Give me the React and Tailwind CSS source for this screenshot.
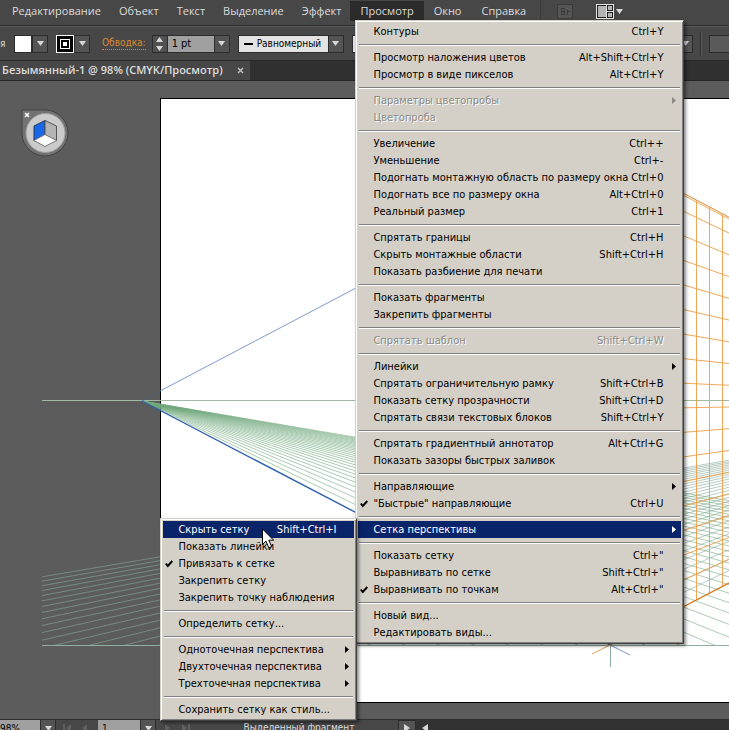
import React from "react";

const SEP = "sep";

const menuNames = ["Редактирование", "Объект", "Текст", "Выделение", "Эффект"];

const gridMenu = [
    { label: "Скрыть сетку", keys: "Shift+Ctrl+I", active: true },
    { label: "Показать линейки" },
    { label: "Привязать к сетке", checked: true },
    { label: "Закрепить сетку" },
    { label: "Закрепить точку наблюдения" },
    SEP,
    { label: "Определить сетку..." },
    SEP,
    { label: "Одноточечная перспектива", more: true },
    { label: "Двухточечная перспектива", more: true },
    { label: "Трехточечная перспектива", more: true },
    SEP,
    { label: "Сохранить сетку как стиль..." },
];

const viewMenu = [
    { label: "Контуры", keys: "Ctrl+Y" },
    SEP,
    { label: "Просмотр наложения цветов", keys: "Alt+Shift+Ctrl+Y" },
    { label: "Просмотр в виде пикселов", keys: "Alt+Ctrl+Y" },
    SEP,
    { label: "Параметры цветопробы", more: true, disabled: true },
    { label: "Цветопроба", disabled: true },
    SEP,
    { label: "Увеличение", keys: "Ctrl++" },
    { label: "Уменьшение", keys: "Ctrl+-" },
    { label: "Подогнать монтажную область по размеру окна", keys: "Ctrl+0" },
    { label: "Подогнать все по размеру окна", keys: "Alt+Ctrl+0" },
    { label: "Реальный размер", keys: "Ctrl+1" },
    SEP,
    { label: "Спрятать границы", keys: "Ctrl+H" },
    { label: "Скрыть монтажные области", keys: "Shift+Ctrl+H" },
    { label: "Показать разбиение для печати" },
    SEP,
    { label: "Показать фрагменты" },
    { label: "Закрепить фрагменты" },
    SEP,
    { label: "Спрятать шаблон", keys: "Shift+Ctrl+W", disabled: true },
    SEP,
    { label: "Линейки", more: true },
    { label: "Спрятать ограничительную рамку", keys: "Shift+Ctrl+B" },
    { label: "Показать сетку прозрачности", keys: "Shift+Ctrl+D" },
    { label: "Спрятать связи текстовых блоков", keys: "Shift+Ctrl+Y" },
    SEP,
    { label: "Спрятать градиентный аннотатор", keys: "Alt+Ctrl+G" },
    { label: "Показать зазоры быстрых заливок" },
    SEP,
    { label: "Направляющие", more: true },
    { label: "\"Быстрые\" направляющие", keys: "Ctrl+U", checked: true },
    SEP,
    { label: "Сетка перспективы", more: true, active: true, children: gridMenu },
    SEP,
    { label: "Показать сетку", keys: "Ctrl+\"" },
    { label: "Выравнивать по сетке", keys: "Shift+Ctrl+\"" },
    { label: "Выравнивать по точкам", keys: "Alt+Ctrl+\"", checked: true },
    SEP,
    { label: "Новый вид..." },
    { label: "Редактировать виды..." },
];

const MenuPanel = ({ items, className }) => (
    <ul
        className={`absolute z-10 border border-t-[#d4d0c8] border-l-[#d4d0c8] border-r-[#404040] border-b-[#404040] bg-[#d4d0c8] p-0.5 shadow-[inset_1px_1px_0_#fff,inset_-1px_-1px_0_#808080,2px_2px_3px_rgba(0,0,0,0.45)] font-['DejaVu_Sans_Condensed','DejaVu_Sans',sans-serif] text-[11px] text-black ${className}`}
    >
        {items.map((item, index) =>
            item === SEP ? (
                <li key={index} className="mx-px flex h-[9px] items-center">
                    <hr className="h-0.5 w-full border-t border-b border-t-[#808080] border-b-white" />
                </li>
            ) : (
                <MenuRow key={index} item={item} />
            )
        )}
    </ul>
);

const MenuRow = ({ item }) => (
    <li className="relative">
        <button
            disabled={item.disabled}
            className={`relative flex h-[17px] w-full items-center justify-between pr-[18px] pl-[15px] leading-[17px] whitespace-nowrap ${
                item.active ? "bg-[#0a246a] text-white" : ""
            } ${item.disabled ? "text-[#8c8a85] [text-shadow:1px_1px_0_#fff]" : ""}`}
        >
            {item.checked && (
                <svg className="absolute top-1 left-0.5" width="8" height="10" viewBox="0 0 8 10">
                    <path d="M0.8 4.5 L2.8 7 L7.3 2" fill="none" stroke="#000" strokeWidth="2" />
                </svg>
            )}
            <span>{item.label}</span>
            {item.keys && <span>{item.keys}</span>}
            {item.more && (
                <svg className="absolute top-[5px] right-[5px]" width="4" height="7" viewBox="0 0 4 7" fill="currentColor">
                    <path d="M0 0 L4 3.5 L0 7 Z" />
                </svg>
            )}
        </button>
        {item.children && <MenuPanel items={item.children} className="-top-[3px] right-full mr-px w-[197px]" />}
    </li>
);

const Caret = ({ className = "" }) => (
    <svg className={className} width="7" height="5" viewBox="0 0 7 5">
        <path d="M0 0 H7 L3.5 5 Z" fill="#d8d8d8" />
    </svg>
);

const DropButton = ({ label }) => (
    <button
        aria-label={label}
        className="flex h-[18px] w-4 shrink-0 items-center justify-center border border-[#2c2c2c] bg-[#545454]"
    >
        <Caret />
    </button>
);

const MenuBar = () => (
    <nav className="flex h-[26px] shrink-0 border-b border-[#2e2e2e] bg-[#474747] pl-[3px] font-['Open_Sans',sans-serif] text-[11px] leading-[22px] text-[#dcdcdc]">
        {menuNames.map((name) => (
            <button key={name} className="h-[22px] px-[9px]">
                {name}
            </button>
        ))}
        <div className="relative">
            <button className="mt-px h-5 bg-[#2b2b2b] px-2.5 leading-5">Просмотр</button>
            <MenuPanel items={viewMenu} className="top-5 left-[5px] w-[329px]" />
        </div>
        <button className="h-[22px] px-2.5">Окно</button>
        <button className="h-[22px] px-2.5">Справка</button>
        <div className="ml-1 h-[22px] border-l border-[#3a3a3a]" />
        <button aria-label="Bridge" className="ml-4 h-[22px]">
            <svg width="17" height="15" viewBox="0 0 17 15">
                <rect x="0.5" y="0.5" width="15" height="14" fill="#545454" stroke="#3b3b3b" />
                <path d="M4.5 4 V11 M4.5 4.5 H7.5 V7.5 H4.5 M7.5 7.5 V10.5 H4.5 M10.5 6 V11 M10.5 7.5 H12.5" fill="none" stroke="#3a3a3a" />
            </svg>
        </button>
        <button aria-label="Рабочая среда" className="ml-[22px] flex h-[22px] items-center gap-0.5">
            <svg width="18" height="15" viewBox="0 0 18 15">
                <rect x="0.5" y="0.5" width="17" height="14" fill="#222" stroke="#e4e4e4" />
                <rect x="2" y="2" width="8" height="11" fill="#b4b4b4" />
                <rect x="12" y="2" width="4" height="4" fill="#b4b4b4" />
                <path d="M11 7.5 H17 M10.5 1 V14" stroke="#e4e4e4" />
                <rect x="12" y="9" width="4" height="4" fill="#b4b4b4" />
            </svg>
            <Caret />
        </button>
    </nav>
);

const ControlBar = () => (
    <div className="flex h-[35px] shrink-0 items-center border-t border-b border-t-[#595959] border-b-[#2a2a2a] bg-[#474747] font-['DejaVu_Sans_Condensed','DejaVu_Sans',sans-serif] text-[11px]">
        <span className="w-[14px] overflow-hidden text-[10px] text-[#dcdcdc]">я</span>
        <button aria-label="Заливка" className="h-[18px] w-[18px] border border-[#2c2c2c] bg-white" />
        <DropButton label="Выбрать заливку" />
        <button aria-label="Цвет обводки" className="ml-2 flex h-[18px] w-[18px] items-center justify-center border border-white bg-black">
            <svg width="10" height="10" viewBox="0 0 10 10">
                <rect x="0.5" y="0.5" width="9" height="9" fill="none" stroke="#fff" />
                <rect x="3" y="3" width="4" height="4" fill="#fff" />
            </svg>
        </button>
        <DropButton label="Выбрать обводку" />
        <a href="#stroke" className="ml-3 border-b border-dotted border-[#d98a2e] text-[10px] leading-3 text-[#d98a2e]">
            Обводка:
        </a>
        <button aria-label="Изменить толщину" className="ml-1.5 flex h-[18px] w-4 flex-col items-center justify-center gap-1 border border-[#2c2c2c] bg-[#505050]">
            <Caret className="rotate-180" />
            <Caret />
        </button>
        <input aria-label="Толщина обводки" defaultValue="1 pt" className="h-[18px] w-[46px] border-y border-[#2c2c2c] bg-[#a0a0a0] px-1 text-black" />
        <DropButton label="Список толщин" />
        <div className="relative ml-2 flex h-[18px] w-[106px]">
            <select aria-label="Профиль" className="w-full appearance-none border border-[#2c2c2c] bg-[#e3e3e3] pl-[18px] text-[10px] leading-4 text-black">
                <option>Равномерный</option>
            </select>
            <span className="absolute top-2 left-1.5 h-0.5 w-[9px] bg-black" />
            <span className="absolute top-0 right-0 flex h-[18px] w-4 items-center justify-center border border-[#2c2c2c] bg-[#545454]">
                <Caret />
            </span>
        </div>
        <input aria-label="Кисть" className="ml-2 h-[18px] min-w-0 flex-1 border border-[#2c2c2c] bg-[#e3e3e3]" />
        <DropButton label="Список кистей" />
        <div className="mx-[7px] h-6 border-r border-l border-r-[#5a5a5a] border-l-[#303030]" />
        <button aria-label="Стиль" className="h-[18px] w-5 border border-r-0 border-[#2c2c2c] bg-[#5a5a5a]" />
    </div>
);

const TabBar = () => (
    <div className="flex h-5 shrink-0 border-b border-[#242424] bg-[#303030]">
        <div className="flex items-center gap-3.5 bg-[#474747] pr-1.5 pl-0.5 font-['Open_Sans',sans-serif] text-[11px] font-semibold text-[#dcdcdc]">
            <span>Безымянный-1 @ 98% (CMYK/Просмотр)</span>
            <button aria-label="Закрыть" className="flex">
                <svg width="7" height="7" viewBox="0 0 7 7">
                    <path d="M1 1 L6 6 M6 1 L1 6" stroke="#c8c8c8" strokeWidth="1.3" />
                </svg>
            </button>
        </div>
    </div>
);

// vanishing points and the ground point the three planes share
const LEFT = { x: 142, y: 401 };
const RIGHT = { x: 1078, y: 401 };
const GROUND = { x: 610, y: 645 };
const SLOPE = (GROUND.y - LEFT.y) / (GROUND.x - LEFT.x);

const floorSlopes = Array.from({ length: 28 }, (_, i) => SLOPE / (1 + 0.074 * (i + 1)));
const wallHeights = [195, ...Array.from({ length: 16 }, (_, i) => 211 + i * 24.6)];

const PerspectiveGrid = () => (
    <svg className="absolute inset-0 h-full w-full" viewBox="0 81 729 638" preserveAspectRatio="xMinYMin slice" fill="none">
        <clipPath id="floor">
            <rect x="42" y="401" width="1036" height="244" />
        </clipPath>
        <path d="M42 400.5 H1200" stroke="#a3b9a3" />
        <g clipPath="url(#floor)" stroke="#72aa7e" strokeWidth="0.6">
            {floorSlopes.map((s, i) => (
                <path key={i} d={`M${LEFT.x} ${LEFT.y} L${RIGHT.x} ${LEFT.y + 936 * s}`} />
            ))}
            {floorSlopes.map((s, i) => (
                <path key={i} d={`M${RIGHT.x} ${RIGHT.y} L42 ${RIGHT.y + 1036 * s}`} stroke="#86aa9b" />
            ))}
        </g>
        <path d="M42 645.5 H1200" stroke="#8fae9f" />
        <g stroke="#ef9d45" strokeWidth="0.9">
            {wallHeights.map((y) => (
                <path key={y} d={`M683 ${y} L${RIGHT.x} ${RIGHT.y}`} />
            ))}
            {[683.5, 696.5, 709.5, 722.5, 735.5].map((x) => (
                <path key={x} d={`M${x} ${401 - (RIGHT.x - x) * 0.525} V${401 + (RIGHT.x - x) * SLOPE}`} />
            ))}
            <path d={`M${GROUND.x} ${GROUND.y} L${RIGHT.x} ${RIGHT.y}`} stroke="#d9791f" strokeWidth="1.4" />
            <path d="M684 193.500 L1078 401" stroke="#d9791f" />
        </g>
        <path d="M160 391 L356 288" stroke="#6f8fc9" strokeWidth="0.9" />
        <path d="M142 401 L160 391" stroke="#4d6180" strokeWidth="0.7" />
        <path d={`M${LEFT.x} ${LEFT.y} L${GROUND.x} ${GROUND.y}`} stroke="#2f62ae" strokeWidth="1.4" />
        <path d="M610 645 L592 654" stroke="#e0a060" />
        <path d="M610 645 L630 655" stroke="#7b95c8" />
        <path d="M610.5 645 V667" stroke="#8fae9f" />
    </svg>
);

const PlaneSwitcher = () => (
    <svg className="absolute top-7 left-[21px]" width="48" height="48" viewBox="0 0 48 48">
        <path d="M1 1 H25 A23 23 0 1 1 1 25 Z" fill="#727272" stroke="#424242" />
        <circle cx="24.5" cy="24" r="19.5" fill="#cbcbcb" stroke="#a0a0a0" />
        <path d="M24 11.500 L13 17 V32 L24 26 Z" fill="#1767e8" stroke="#27395c" />
        <path d="M24 11.500 L35.500 17 V32 L24 26 Z" fill="#b4b4b4" stroke="#555" />
        <path d="M24 25.500 L35.500 31.500 L24 37.500 L13 31.500 Z" fill="#fff" stroke="#777" />
        <path d="M4 4 L8 8 M8 4 L4 8" stroke="#fff" strokeWidth="1.600" />
    </svg>
);

const Pointer = () => (
    <svg className="pointer-events-none absolute top-[447px] left-[262px] z-20" width="13" height="21" viewBox="0 0 13 21">
        <path d="M0.500 1 V16.500 L4 13.200 L6.800 19.800 L9.600 18.600 L6.800 12.200 H11.700 Z" fill="#fff" stroke="#000" />
    </svg>
);

const StatusBar = () => (
    <div className="h-[11px] shrink-0 overflow-hidden border-t border-[#303030] bg-[#474747] font-['DejaVu_Sans_Condensed','DejaVu_Sans',sans-serif] text-[10px]">
        <div className="flex h-4 items-center">
            <input aria-label="Масштаб" defaultValue="98%" className="h-4 w-10 bg-[#a0a0a0] text-black" />
            <DropButton label="Выбрать масштаб" />
            <svg className="mx-1.5 shrink-0" width="30" height="10" viewBox="0 0 30 10" fill="#606060">
                <path d="M1 1 H3 V9 H1 Z M9 1 V9 L4 5 Z M25 1 V9 L20 5 Z" />
            </svg>
            <input aria-label="Монтажная область" defaultValue="1" className="h-4 w-[42px] bg-[#a0a0a0] px-1 text-black" />
            <DropButton label="Выбрать область" />
            <svg className="mx-2 shrink-0" width="28" height="10" viewBox="0 0 28 10" fill="#606060">
                <path d="M1 1 V9 L6 5 Z M18 1 V9 L23 5 Z M24 1 H26 V9 H24 Z" />
            </svg>
            <span className="w-[198px] shrink-0 text-center leading-[14px] text-[#dcdcdc]">Выделенный фрагмент</span>
            <button aria-label="Показать" className="flex h-4 w-[18px] shrink-0 items-center justify-center border border-[#2c2c2c] bg-[#545454]">
                <svg width="6" height="8" viewBox="0 0 6 8">
                    <path d="M0 0 V8 L6 4 Z" fill="#d8d8d8" />
                </svg>
            </button>
            <div className="flex h-4 flex-1 items-center bg-[#323232] pl-1.5">
                <svg width="6" height="8" viewBox="0 0 6 8">
                    <path d="M6 0 V8 L0 4 Z" fill="#d8d8d8" />
                </svg>
            </div>
        </div>
    </div>
);

const App = () => (
    <div className="flex h-screen flex-col overflow-hidden bg-[#5c5c5c]">
        <MenuBar />
        <ControlBar />
        <TabBar />
        <main className="relative flex flex-1 pt-[17px] pb-4 pl-40">
            <div className="flex-1 border-y border-l border-black bg-white" />
            <PerspectiveGrid />
            <PlaneSwitcher />
            <Pointer />
        </main>
        <StatusBar />
    </div>
);

export default App;
